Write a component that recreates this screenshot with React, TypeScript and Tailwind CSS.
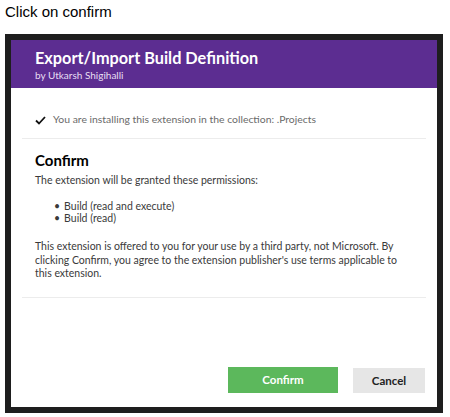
export default function App() {
  return (
    <div className="w-[450px] h-[417px] bg-white font-['Lato',sans-serif] text-[#3a3a3a]">
      <div className="pl-[5px] pt-[2px] h-[34px] text-[15px] text-black font-['Liberation_Sans',sans-serif] leading-[20px]">
        Click on confirm
      </div>
      <div className="ml-[5px] w-[438px] h-[379px] border-[6px] border-[#1e1e1e] bg-white flex flex-col">
        {/* header */}
        <div className="h-[48px] bg-[#5c2d91] pl-[24px] pt-[8px] text-white">
          <div className="text-[16.3px] font-bold leading-[20px]">Export/Import Build Definition</div>
          <div className="text-[10px] leading-[14px] text-[#e8dff3]">by Utkarsh Shigihalli</div>
        </div>

        {/* collection row */}
        <div className="h-[50px] flex items-center pl-[24px] pt-[14px] gap-[7px]">
          <svg width="11" height="9" viewBox="0 0 11 9" className="shrink-0">
            <path d="M1 4.5 L4 7.5 L10 1" fill="none" stroke="#111" strokeWidth="1.8" />
          </svg>
          <span className="text-[10.4px] text-[#6a6a6a]">You are installing this extension in the collection: .Projects</span>
        </div>
        <div className="mx-[11px] h-px bg-[#ececec]" />

        {/* confirm section */}
        <div className="px-[24px] pt-[12px] pb-[16px]">
          <div className="text-[15px] font-bold text-black leading-[18px]">Confirm</div>
          <div className="text-[10.5px] leading-[14px] mt-[4px]">The extension will be granted these permissions:</div>
          <ul className="mt-[13px] pl-[19px] text-[10.5px] leading-[12px]">
            <li className="flex gap-[4px]"><span>•</span><span>Build (read and execute)</span></li>
            <li className="flex gap-[4px]"><span>•</span><span>Build (read)</span></li>
          </ul>
          <p className="mt-[16px] text-[10.5px] leading-[13.5px]">
            This extension is offered to you for your use by a third party, not Microsoft. By clicking Confirm, you agree to the extension publisher's use terms applicable to this extension.
          </p>
        </div>
        <div className="mx-[11px] h-px bg-[#ececec]" />

        {/* buttons */}
        <div className="flex-1 flex items-end justify-end gap-[15px] pr-[12px] pb-[14px]">
          <button className="w-[110px] h-[26px] bg-[#5cb85c] text-white text-[11.5px] font-bold">Confirm</button>
          <button className="w-[72px] h-[25px] bg-[#e6e6e6] text-[#222] text-[11.5px] font-bold">Cancel</button>
        </div>
      </div>
    </div>
  );
}
